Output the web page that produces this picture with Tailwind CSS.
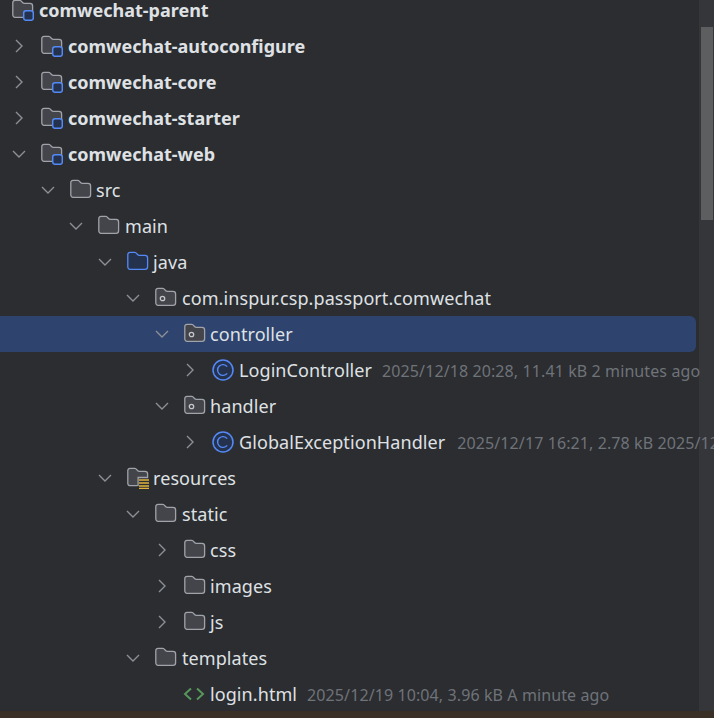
<!DOCTYPE html>
<html lang="en">
<head>
  <meta charset="UTF-8">
  <title>Project tree</title>
  <script src="https://cdn.jsdelivr.net/npm/@tailwindcss/browser@4"></script>
</head>
<body class="bg-[#2b2d30] font-['Noto_Sans',sans-serif] text-[18px] tracking-[0.08px] text-[#dfe1e5] overflow-hidden h-[718px]">
  <svg width="0" height="0" class="absolute">
    <defs>
      <symbol id="right" viewBox="0 0 14 14"><path d="M4 1l6 6-6 6" fill="none" stroke="#8c8f96" stroke-width="1.4"/></symbol>
      <symbol id="down" viewBox="0 0 14 14"><path d="M1 4l6 6 6-6" fill="none" stroke="#8c8f96" stroke-width="1.4"/></symbol>
      <symbol id="folder" viewBox="0 0 22 22"><path d="M.8 3.5a2.2 2.2 0 0 1 2.2-2.2h4.6a2 2 0 0 1 1.4.6l1.8 1.9a2 2 0 0 0 1.4.6H18a2.6 2.6 0 0 1 2.6 2.6v8.7a2.6 2.6 0 0 1-2.6 2.6H3a2.2 2.2 0 0 1-2.2-2.2z" fill="#43454a" stroke="#a0a3aa" stroke-width="1.3"/></symbol>
      <symbol id="module" viewBox="0 0 22 22"><path d="M.8 3.5a2.2 2.2 0 0 1 2.2-2.2h4.6a2 2 0 0 1 1.4.6l1.8 1.9a2 2 0 0 0 1.4.6H18a2.6 2.6 0 0 1 2.6 2.6v8.7a2.6 2.6 0 0 1-2.6 2.6H3a2.2 2.2 0 0 1-2.2-2.2z" fill="#43454a" stroke="#a0a3aa" stroke-width="1.3"/><rect x="11.700" y="11.700" width="9.600" height="9.600" rx="2.400" fill="#25324d" stroke="#548af7" stroke-width="1.500"/></symbol>
      <symbol id="package" viewBox="0 0 22 22"><path d="M.8 3.5a2.2 2.2 0 0 1 2.2-2.2h4.6a2 2 0 0 1 1.4.6l1.8 1.9a2 2 0 0 0 1.4.6H18a2.6 2.6 0 0 1 2.6 2.6v8.7a2.6 2.6 0 0 1-2.6 2.6H3a2.2 2.2 0 0 1-2.2-2.2z" fill="#43454a" stroke="#a0a3aa" stroke-width="1.3"/><circle cx="7.500" cy="11.500" r="2.200" fill="none" stroke="#c4c6cc" stroke-width="1.300"/></symbol>
      <symbol id="source" viewBox="0 0 22 22"><path d="M.8 3.5a2.2 2.2 0 0 1 2.2-2.2h4.6a2 2 0 0 1 1.4.6l1.8 1.9a2 2 0 0 0 1.4.6H18a2.6 2.6 0 0 1 2.6 2.6v8.7a2.6 2.6 0 0 1-2.6 2.6H3a2.2 2.2 0 0 1-2.2-2.2z" fill="#25324d" stroke="#548af7" stroke-width="1.3"/></symbol>
      <symbol id="resources" viewBox="0 0 22 22"><path d="M9.500 18.600H3a2.200 2.200 0 0 1-2.200-2.200V3.500a2.200 2.200 0 0 1 2.200-2.200h4.600a2 2 0 0 1 1.400.6l1.800 1.900a2 2 0 0 0 1.400.6H18a2.600 2.600 0 0 1 2.600 2.600v3.500h-9.500v7.900z" fill="#43454a" stroke="#a0a3aa" stroke-width="1.300"/><path d="M12 13h10M12 16h10M12 19h10M12 21.500h10" stroke="#e0b23c" stroke-width="1.500"/></symbol>
      <symbol id="class" viewBox="0 0 22 22"><circle cx="11" cy="11" r="10" fill="#25324d" stroke="#548af7" stroke-width="1.500"/><path d="M15.200 7.600a5.400 5.400 0 1 0 0 6.800" fill="none" stroke="#548af7" stroke-width="1.400"/></symbol>
      <symbol id="html" viewBox="0 0 22 14"><path d="M8 1.500L2 7l6 5.500M14 1.500L20 7l-6 5.500" fill="none" stroke="#57965c" stroke-width="2"/></symbol>
    </defs>
  </svg>

  <!-- scrollbar sits behind the rows, long metadata runs over its track -->
  <div class="absolute top-0 right-0 h-[711px] w-[15px] bg-[#35363a] pt-[27px] pl-[2px]">
    <div class="h-[193px] w-[12px] bg-[#5d5e60]"></div>
  </div>

  <div class="relative h-[711px] overflow-hidden">
    <ul class="-mt-2">
      <li class="flex items-center h-9 pl-[12px] font-bold tracking-normal"><svg class="shrink-0 w-[22px] h-[22px] mr-[5px]"><use href="#module"/></svg>comwechat-parent</li>

      <li class="flex items-center h-9 pl-[12px] font-bold tracking-normal"><svg class="shrink-0 w-[14px] h-[14px] mr-[15px]"><use href="#right"/></svg><svg class="shrink-0 w-[22px] h-[22px] mr-[5px]"><use href="#module"/></svg>comwechat-autoconfigure</li>
      <li class="flex items-center h-9 pl-[12px] font-bold tracking-normal"><svg class="shrink-0 w-[14px] h-[14px] mr-[15px]"><use href="#right"/></svg><svg class="shrink-0 w-[22px] h-[22px] mr-[5px]"><use href="#module"/></svg>comwechat-core</li>
      <li class="flex items-center h-9 pl-[12px] font-bold tracking-normal"><svg class="shrink-0 w-[14px] h-[14px] mr-[15px]"><use href="#right"/></svg><svg class="shrink-0 w-[22px] h-[22px] mr-[5px]"><use href="#module"/></svg>comwechat-starter</li>
      <li class="flex items-center h-9 pl-[12px] font-bold tracking-normal"><svg class="shrink-0 w-[14px] h-[14px] mr-[15px]"><use href="#down"/></svg><svg class="shrink-0 w-[22px] h-[22px] mr-[5px]"><use href="#module"/></svg>comwechat-web</li>

      <li class="flex items-center h-9 pl-[41px]"><svg class="shrink-0 w-[14px] h-[14px] mr-[15px]"><use href="#down"/></svg><svg class="shrink-0 w-[22px] h-[22px] mr-[4px]"><use href="#folder"/></svg>src</li>
      <li class="flex items-center h-9 pl-[69px]"><svg class="shrink-0 w-[14px] h-[14px] mr-[15px]"><use href="#down"/></svg><svg class="shrink-0 w-[22px] h-[22px] mr-[5px]"><use href="#folder"/></svg>main</li>
      <li class="flex items-center h-9 pl-[98px]"><svg class="shrink-0 w-[14px] h-[14px] mr-[15px]"><use href="#down"/></svg><svg class="shrink-0 w-[22px] h-[22px] mr-[4px]"><use href="#source"/></svg>java</li>
      <li class="flex items-center h-9 pl-[126px]"><svg class="shrink-0 w-[14px] h-[14px] mr-[15px]"><use href="#down"/></svg><svg class="shrink-0 w-[22px] h-[22px] mr-[5px]"><use href="#package"/></svg>com.inspur.csp.passport.comwechat</li>
      <li class="flex items-center h-9 w-[696px] pl-[155px] bg-[#2e436e] rounded-r-[6px]"><svg class="shrink-0 w-[14px] h-[14px] mr-[15px]"><use href="#down"/></svg><svg class="shrink-0 w-[22px] h-[22px] mr-[4px]"><use href="#package"/></svg>controller</li>
      <li class="flex items-center h-9 pl-[183px] whitespace-nowrap"><svg class="shrink-0 w-[14px] h-[14px] mr-[15px]"><use href="#right"/></svg><svg class="shrink-0 w-[22px] h-[22px] mr-[5px]"><use href="#class"/></svg>LoginController<span class="ml-[10px] mt-[2px] text-[16px] tracking-[0.1px] text-[#6f737a]">2025/12/18 20:28, 11.41 kB 2 minutes ago</span></li>
      <li class="flex items-center h-9 pl-[155px]"><svg class="shrink-0 w-[14px] h-[14px] mr-[15px]"><use href="#down"/></svg><svg class="shrink-0 w-[22px] h-[22px] mr-[4px]"><use href="#package"/></svg>handler</li>
      <li class="flex items-center h-9 pl-[183px] whitespace-nowrap"><svg class="shrink-0 w-[14px] h-[14px] mr-[15px]"><use href="#right"/></svg><svg class="shrink-0 w-[22px] h-[22px] mr-[5px]"><use href="#class"/></svg>GlobalExceptionHandler<span class="ml-[12px] mt-[2px] text-[16px] tracking-[0.1px] text-[#6f737a]">2025/12/17 16:21, 2.78 kB 2025/12</span></li>

      <li class="flex items-center h-9 pl-[98px]"><svg class="shrink-0 w-[14px] h-[14px] mr-[15px]"><use href="#down"/></svg><svg class="shrink-0 w-[22px] h-[22px] mr-[4px]"><use href="#resources"/></svg>resources</li>
      <li class="flex items-center h-9 pl-[126px]"><svg class="shrink-0 w-[14px] h-[14px] mr-[15px]"><use href="#down"/></svg><svg class="shrink-0 w-[22px] h-[22px] mr-[5px]"><use href="#folder"/></svg>static</li>
      <li class="flex items-center h-9 pl-[155px]"><svg class="shrink-0 w-[14px] h-[14px] mr-[15px]"><use href="#right"/></svg><svg class="shrink-0 w-[22px] h-[22px] mr-[4px]"><use href="#folder"/></svg>css</li>
      <li class="flex items-center h-9 pl-[155px]"><svg class="shrink-0 w-[14px] h-[14px] mr-[15px]"><use href="#right"/></svg><svg class="shrink-0 w-[22px] h-[22px] mr-[4px]"><use href="#folder"/></svg>images</li>
      <li class="flex items-center h-9 pl-[155px]"><svg class="shrink-0 w-[14px] h-[14px] mr-[15px]"><use href="#right"/></svg><svg class="shrink-0 w-[22px] h-[22px] mr-[4px]"><use href="#folder"/></svg>js</li>
      <li class="flex items-center h-9 pl-[126px]"><svg class="shrink-0 w-[14px] h-[14px] mr-[15px]"><use href="#down"/></svg><svg class="shrink-0 w-[22px] h-[22px] mr-[5px]"><use href="#folder"/></svg>templates</li>
      <li class="flex items-center h-9 pl-[183px] whitespace-nowrap"><svg class="shrink-0 w-[22px] h-[14px] mr-[5px]"><use href="#html"/></svg>login.html<span class="ml-[10px] mt-[2px] text-[16px] tracking-[0.1px] text-[#6f737a]">2025/12/19 10:04, 3.96 kB A minute ago</span></li>
    </ul>
  </div>
  <div class="h-[7px] bg-[#3b3026]"></div>
</body>
</html>
